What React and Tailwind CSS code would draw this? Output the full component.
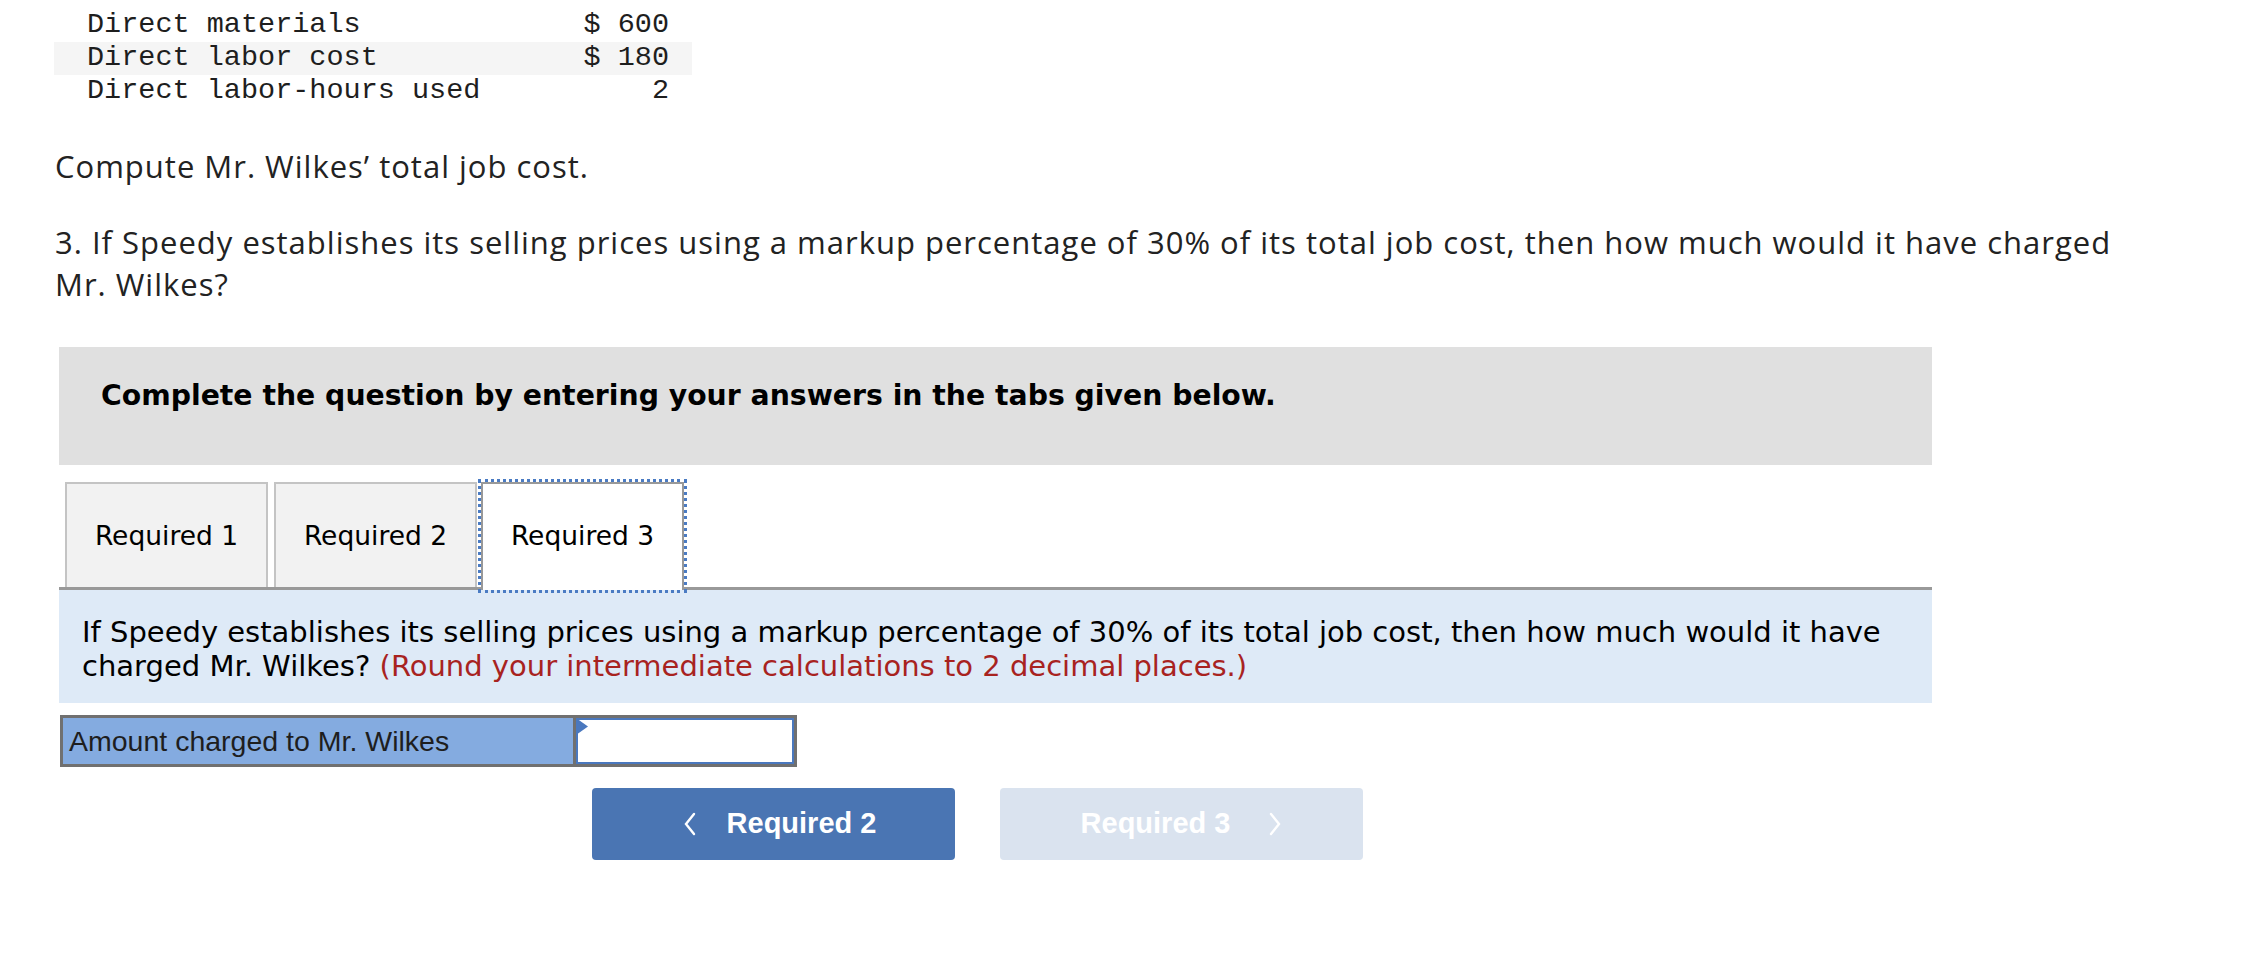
import React from "react";

const mono = { fontFamily: "'Liberation Mono', 'Courier New', monospace" };

function ChevronLeft() {
  return (
    <svg width="14" height="24" viewBox="0 0 14 24" fill="none">
      <polyline points="11,2 3,12 11,22" stroke="white" strokeWidth="2.4" strokeLinejoin="miter" strokeLinecap="round" />
    </svg>
  );
}

function ChevronRight() {
  return (
    <svg width="14" height="24" viewBox="0 0 14 24" fill="none">
      <polyline points="3,2 11,12 3,22" stroke="white" strokeWidth="2.4" strokeLinejoin="miter" strokeLinecap="round" />
    </svg>
  );
}

export default function App() {
  const rows = [
    ["Direct materials", "$ 600", false],
    ["Direct labor cost", "$ 180", true],
    ["Direct labor-hours used", "2", false],
  ];
  return (
    <div className="w-[2260px] h-[970px] bg-white text-[#222] overflow-hidden">
      {/* data table */}
      <div className="pt-[9px] pl-[54px]">
        <div className="w-[638px] text-[28.5px] text-[#1e1e1e]" style={mono}>
          {rows.map(([label, value, shaded]) => (
            <div
              key={label}
              className={`flex h-[33px] items-center justify-between pl-[33px] pr-[23px] whitespace-pre ${shaded ? "bg-[#f5f5f5]" : ""}`}
            >
              <span>{label}</span>
              <span>{value}</span>
            </div>
          ))}
        </div>
      </div>

      {/* prose */}
      <div className="pl-[55px] text-[31px] leading-[42px] tracking-[1px] text-[#222]" style={{ fontFamily: "'Open Sans', Lato, sans-serif" }}>
        <p className="mt-[37px]">Compute Mr. Wilkes’ total job cost.</p>
        <p className="mt-[34px] whitespace-nowrap">
          3. If Speedy establishes its selling prices using a markup percentage of 30% of its total job cost, then how much would it have charged
          <br />
          Mr. Wilkes?
        </p>
      </div>

      {/* question box */}
      <div className="ml-[59px] w-[1873px]" style={{ fontFamily: "'DejaVu Sans', Verdana, sans-serif" }}>
        <div className="mt-[42px] h-[118px] bg-[#e0e0e0] pl-[42px] pt-[32px]">
          <p className="text-[28.3px] leading-[34px] font-bold text-black">
            Complete the question by entering your answers in the tabs given below.
          </p>
        </div>

        {/* tabs */}
        <div className="mt-[17px] flex items-end pl-[6px] gap-[6px] h-[105px] relative z-10">
          <div className="w-[203px] h-[105px] bg-[#f2f2f2] border-2 border-b-0 border-[#c4c4c4] flex items-center justify-center text-[26.5px] text-black">
            Required 1
          </div>
          <div className="w-[203px] h-[105px] bg-[#f2f2f2] border-2 border-b-0 border-[#c4c4c4] flex items-center justify-center text-[26.5px] text-black">
            Required 2
          </div>
          <div className="w-[203px] h-[108px] -mb-[3px] -ml-[2px] bg-white border-2 border-b-0 border-[#999999] outline-[3px] outline-dotted outline-[#4a7bc3] flex items-center justify-center text-[26.5px] text-black pb-[3px]">
            Required 3
          </div>
        </div>

        {/* instruction panel */}
        <div className="border-t-[3px] border-[#999999] bg-[#deeaf7] h-[116px] pl-[23px] pt-[25px]">
          <p className="text-[29px] leading-[34px] text-black">
            If Speedy establishes its selling prices using a markup percentage of 30% of its total job cost, then how much would it have
            <br />
            charged Mr. Wilkes? <span className="text-[#a8231f]">(Round your intermediate calculations to 2 decimal places.)</span>
          </p>
        </div>
      </div>

      {/* answer row */}
      <div className="ml-[60px] mt-[12px] flex w-[737px] h-[52px] border-[3px] border-[#707070]">
        <div
          className="w-[513px] bg-[#84abe0] border-r-[3px] border-[#707070] flex items-center pl-[6px] text-[28.5px] text-[#1e1e1e]"
          style={{ fontFamily: "'Liberation Sans', Arial, sans-serif" }}
        >
          Amount charged to Mr. Wilkes
        </div>
        <div className="relative flex-1 bg-white border-2 border-[#4a78be]">
          <svg className="absolute -left-[2px] -top-[2px]" width="13" height="17" viewBox="0 0 13 17">
            <polygon points="0,0 12,8.5 0,17" fill="#4a78be" />
          </svg>
        </div>
      </div>

      {/* nav buttons */}
      <div className="mt-[21px] ml-[592px] flex gap-[45px]" style={{ fontFamily: "'Liberation Sans', Arial, sans-serif" }}>
        <button className="w-[363px] h-[72px] rounded-[4px] bg-[#4a75b3] flex items-center justify-center gap-[30px] pl-[12px] text-white text-[29px] font-bold">
          <ChevronLeft />
          <span>Required 2</span>
        </button>
        <button className="w-[363px] h-[72px] rounded-[4px] bg-[#dae3ef] flex items-center justify-center gap-[38px] text-white text-[29px] font-bold">
          <span>Required 3</span>
          <ChevronRight />
        </button>
      </div>
    </div>
  );
}
